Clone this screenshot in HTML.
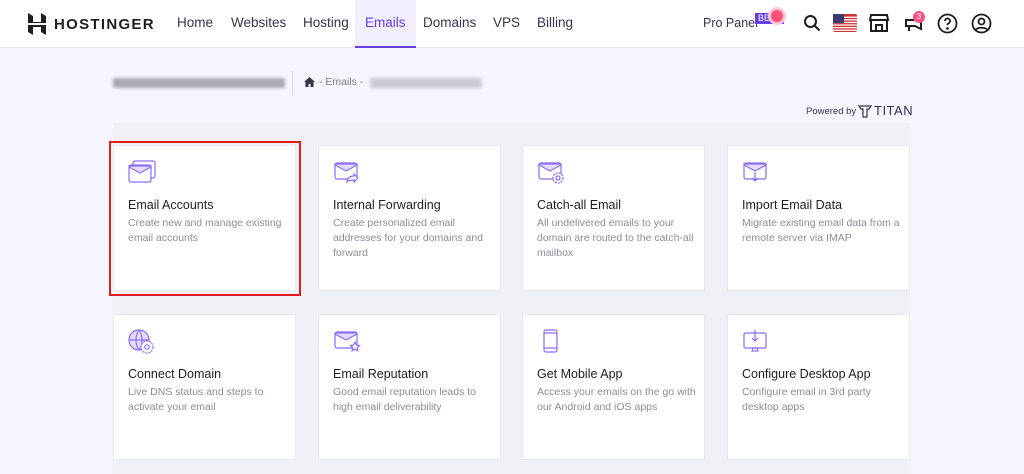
<!DOCTYPE html>
<html><head><meta charset="utf-8">
<style>
*{box-sizing:border-box;margin:0;padding:0}
body{width:1024px;height:474px;overflow:hidden;background:#f4f5fe;font-family:"Liberation Sans",sans-serif;position:relative}
.hdr{position:absolute;left:0;top:0;width:1024px;height:48px;background:#fff;border-bottom:1px solid #e4e4ea}
.logo{position:absolute;left:28px;top:13px;display:flex;align-items:center}
.logo span{font-weight:bold;font-size:15px;letter-spacing:1.3px;color:#1d1e20;margin-left:8px}
.nav a{position:absolute;top:0;height:48px;line-height:46px;font-size:13.5px;color:#36344d;text-decoration:none;font-family:"Liberation Sans",sans-serif}
.nav a.act{background:#f1effd;color:#673de6;border-bottom:2px solid #673de6;padding:0 10px}
.panel{position:absolute;left:113px;top:123px;width:797px;height:351px;background:#f0f1f7}
.card{position:absolute;width:183px;height:146px;background:#fff;border:1px solid #e8e8ee}
.card svg{position:absolute;left:14px;top:14px}
.card h3{position:absolute;left:14px;top:52px;font-size:12.5px;font-weight:normal;color:#1d1e20;font-family:"Liberation Sans",sans-serif}
.card p{position:absolute;left:14px;top:70px;width:162px;font-size:10.5px;line-height:15px;color:#8c8c99;font-family:"Liberation Sans",sans-serif}
.blur{position:absolute;height:10px;background:#a9a9b4;filter:blur(1.5px);border-radius:2px}
</style></head><body>
<div class="hdr">
 <div class="logo"><svg width="18" height="22" viewBox="0 0 18 22"><path d="M0 0l5 3v6h8V0l5 3v7H0z M0 12h18v10l-5-3v-5H5v8l-5-3z" fill="#1d1e20"/></svg><span>HOSTINGER</span></div>
 <div class="nav">
  <a style="left:177px">Home</a><a style="left:231px">Websites</a><a style="left:303px">Hosting</a>
  <a class="act" style="left:355px">Emails</a><a style="left:423px">Domains</a><a style="left:493px">VPS</a><a style="left:537px">Billing</a>
 </div>
 <div style="position:absolute;left:703px;top:16px;font-size:12.5px;color:#36344d">Pro Panel</div>
 <div style="position:absolute;left:755px;top:13px;background:#673de6;color:#fff;font-size:9px;padding:0 3px;height:11px;line-height:11px">BETA</div>
 <div style="position:absolute;left:771px;top:10px;width:12px;height:12px;border-radius:50%;background:#ff4f7b;box-shadow:0 0 0 3px #fcc8d6"></div>
 <svg style="position:absolute;left:803px;top:14px" width="18" height="18" viewBox="0 0 18 18" fill="none" stroke="#1d1e20" stroke-width="2"><circle cx="7.5" cy="7.5" r="5.5"/><path d="M11.5 11.5l5 5"/></svg>
 <svg style="position:absolute;left:833px;top:14px" width="24" height="18" viewBox="0 0 24 18"><rect width="24" height="18" rx="2" fill="#c33"/><g fill="#fff"><rect y="2.6" width="24" height="1.3"/><rect y="5.2" width="24" height="1.3"/><rect y="7.8" width="24" height="1.3"/><rect y="10.4" width="24" height="1.3"/><rect y="13" width="24" height="1.3"/><rect y="15.6" width="24" height="1.3"/></g><rect width="11" height="9" fill="#3c3b6e"/></svg>
 <svg style="position:absolute;left:869px;top:14px" width="20" height="18" viewBox="0 0 20 18" fill="none" stroke="#1d1e20" stroke-width="2"><path d="M2 1h16l1 5H1z M2 6v11h16V6 M7 17v-6h6v6"/></svg>
 <svg style="position:absolute;left:904px;top:15px" width="20" height="18" viewBox="0 0 20 18" fill="none" stroke="#1d1e20" stroke-width="2"><path d="M2 5h9l6-3v12l-6-3H2z M5 11v5"/></svg>
 <div style="position:absolute;left:913px;top:11px;width:12px;height:12px;border-radius:50%;background:#fc5185;color:#fff;font-size:8px;text-align:center;line-height:12px">3</div>
 <svg style="position:absolute;left:937px;top:13px" width="21" height="21" viewBox="0 0 21 21" fill="none" stroke="#1d1e20" stroke-width="1.8"><circle cx="10.5" cy="10.5" r="9"/><path d="M8 8a2.5 2.5 0 1 1 3.5 2.3c-.8.4-1 1-1 2"/><circle cx="10.5" cy="15.5" r=".5" fill="#1d1e20"/></svg>
 <svg style="position:absolute;left:971px;top:13px" width="21" height="21" viewBox="0 0 21 21" fill="none" stroke="#1d1e20" stroke-width="1.8"><circle cx="10.5" cy="10.5" r="9"/><circle cx="10.5" cy="8.5" r="3"/><path d="M4.5 17c2-3 10-3 12 0"/></svg>
</div>
<div class="blur" style="left:113px;top:78px;width:172px"></div>
<div style="position:absolute;left:292px;top:71px;width:1px;height:24px;background:#dcdce4"></div>
<svg style="position:absolute;left:304px;top:77px" width="11" height="10" viewBox="0 0 11 10"><path d="M5.5 0L0 5h1.5v5h3V7h2v3h3V5H11z" fill="#36344d"/></svg>
<div style="position:absolute;left:319px;top:76px;font-size:10.5px;color:#7b7b88">- Emails -</div>
<div class="blur" style="left:370px;top:78px;width:112px;background:#cacad2"></div>
<div style="position:absolute;left:806px;top:106px;font-size:9.5px;color:#36344d">Powered by</div>
<svg style="position:absolute;left:858px;top:105px" width="14" height="13" viewBox="0 0 14 13" fill="none" stroke="#36344d" stroke-width="1.2"><path d="M1 1h12l-2 3H9v8H5V4H3z"/></svg>
<div style="position:absolute;left:874px;top:103px;font-size:13px;color:#36344d;letter-spacing:.5px">TITAN</div>
<div class="panel"></div>
<div style="position:absolute;left:109px;top:141px;width:192px;height:155px;border:2px solid #e51a1a"></div>
<div class="card" style="left:113px;top:145px"><svg width="28" height="24" viewBox="0 0 28 24" fill="none" stroke="#8c6cf5" stroke-width="1.2"><rect x="5" y="1" width="22" height="17" rx="2"/><rect x="1" y="5" width="22" height="17" rx="2" fill="#fff"/><path d="M1 7l11 6 11-6V6H1z" fill="#e4dcfd"/></svg><h3>Email Accounts</h3><p>Create new and manage existing email accounts</p></div>
<div class="card" style="left:318px;top:145px"><svg width="28" height="24" viewBox="0 0 28 24" fill="none" stroke="#8c6cf5" stroke-width="1.2"><rect x="2" y="3" width="22" height="16" rx="2"/><path d="M2 5l11 6 11-6V4H2z" fill="#e4dcfd"/><path d="M14 22c0-4 3-6 7-6v-2l4 4-4 4v-2c-3 0-5 0-7 2z" fill="#fff"/></svg><h3>Internal Forwarding</h3><p>Create personalized email addresses for your domains and forward</p></div>
<div class="card" style="left:522px;top:145px"><svg width="28" height="24" viewBox="0 0 28 24" fill="none" stroke="#8c6cf5" stroke-width="1.2"><rect x="2" y="3" width="22" height="16" rx="2"/><path d="M2 5l11 6 11-6V4H2z" fill="#e4dcfd"/><circle cx="21" cy="18" r="5" fill="#fff" stroke-dasharray="2 1"/><circle cx="21" cy="18" r="2"/></svg><h3>Catch-all Email</h3><p>All undelivered emails to your domain are routed to the catch-all mailbox</p></div>
<div class="card" style="left:727px;top:145px"><svg width="28" height="24" viewBox="0 0 28 24" fill="none" stroke="#8c6cf5" stroke-width="1.2"><rect x="2" y="3" width="22" height="16" rx="2"/><path d="M2 5l11 6 11-6V4H2z" fill="#e4dcfd"/><path d="M13 12v9m-3-3l3 3 3-3"/></svg><h3>Import Email Data</h3><p>Migrate existing email data from a remote server via IMAP</p></div>
<div class="card" style="left:113px;top:314px"><svg width="28" height="26" viewBox="0 0 28 26" fill="none" stroke="#8c6cf5" stroke-width="1.2"><circle cx="11" cy="11" r="10" fill="#e4dcfd"/><path d="M1 11h20M11 1c-4 5-4 15 0 20M11 1c4 5 4 15 0 20"/><circle cx="19" cy="18" r="6" fill="#fff" stroke-dasharray="2 1"/><circle cx="19" cy="18" r="2.2"/></svg><h3>Connect Domain</h3><p>Live DNS status and steps to activate your email</p></div>
<div class="card" style="left:318px;top:314px"><svg width="28" height="26" viewBox="0 0 28 26" fill="none" stroke="#8c6cf5" stroke-width="1.2"><rect x="2" y="3" width="22" height="16" rx="2"/><path d="M2 5l11 6 11-6V4H2z" fill="#e4dcfd"/><path d="M22 13l1.5 3 3 .5-2.2 2 .6 3.2-2.9-1.6-2.9 1.6.6-3.2-2.2-2 3-.5z" fill="#fff"/></svg><h3>Email Reputation</h3><p>Good email reputation leads to high email deliverability</p></div>
<div class="card" style="left:522px;top:314px"><svg width="28" height="26" viewBox="0 0 28 26" fill="none" stroke="#8c6cf5" stroke-width="1.2"><rect x="7" y="1" width="13" height="22" rx="2"/><path d="M7 4h13M7 19h13"/></svg><h3>Get Mobile App</h3><p>Access your emails on the go with our Android and iOS apps</p></div>
<div class="card" style="left:727px;top:314px"><svg width="28" height="26" viewBox="0 0 28 26" fill="none" stroke="#8c6cf5" stroke-width="1.2"><rect x="2" y="4" width="22" height="15" rx="1.5"/><path d="M10 22h6l-1-3h-4z M13 1v11m-3-3l3 3 3-3"/></svg><h3>Configure Desktop App</h3><p>Configure email in 3rd party desktop apps</p></div>
</body></html>
